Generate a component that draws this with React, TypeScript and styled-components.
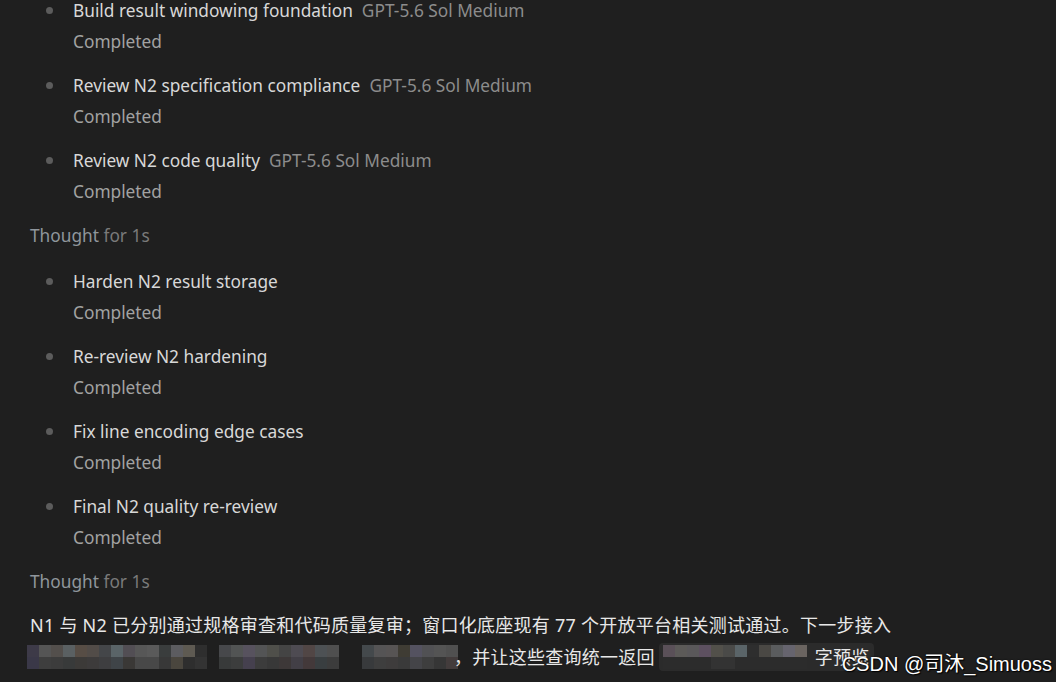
import styled, { createGlobalStyle } from "styled-components";

const GlobalStyle = createGlobalStyle`
  html, body {
    margin: 0;
    padding: 0;
    background: #1f1f1f;
  }
  body {
    width: 1056px;
    height: 682px;
    overflow: hidden;
    font-family: "Noto Sans", "Open Sans", "Noto Sans CJK SC", sans-serif;
  }
`;

type Task = { title: string; model?: string };

const firstBatch: Task[] = [
  { title: "Build result windowing foundation", model: "GPT-5.6 Sol Medium" },
  { title: "Review N2 specification compliance", model: "GPT-5.6 Sol Medium" },
  { title: "Review N2 code quality", model: "GPT-5.6 Sol Medium" },
];

const secondBatch: Task[] = [
  { title: "Harden N2 result storage" },
  { title: "Re-review N2 hardening" },
  { title: "Fix line encoding edge cases" },
  { title: "Final N2 quality re-review" },
];

// redacted spans, two rows of 12px cells
const blockA = [
  ["#3d3a48", "#555555", "#534f4c", "#5a6062", "#574d45", "#524c48", "#444649", "#5a6468", "#524e54", "#575757", "#5a5a5a", "#3a3d3d", "#5c5c60", "#5e5a52", "#2e2e2e"],
  ["#3a3848", "#3e3e3e", "#3c3c3c", "#383a3a", "#3c3a38", "#3d3b3b", "#3e3e40", "#3f4448", "#3a3836", "#484848", "#484848", "#383838", "#4a463e", "#2e2e2e", "#333333"],
];
const blockB = [
  ["#47484b", "#525454", "#57525e", "#535455", "#4f4f4a", "#444444", "#4e4b52", "#514645", "#4d5154", "#4f4f4f"],
  ["#383a3a", "#3c3d3d", "#45404e", "#3c3c3c", "#383838", "#3d3838", "#423f46", "#43393a", "#393e40", "#3c3c3c"],
];
const blockC = [
  ["#44494c", "#555455", "#575454", "#3f3c34", "#545260", "#515154", "#545454", "#505050"],
  ["#383a3c", "#3e3e3e", "#3e3c3c", "#3a3a3a", "#444448", "#3e3e3e", "#363636", "#433c3c"],
];
const blockD = [
  ["#5a5058", "#5c5a58", "#5a585a", "#5d5060", "#52504a", "#4a4a48", "#5a6468", "#2e2e2e", "#4a4844", "#5a5c5e", "#66646e", "#6a6460"],
  ["#2c2c2c", "#2c2c2c", "#2c2c2c", "#2c2c2c", "#333333", "#333333", "#2c2c2c", "#2c2c2c", "#2c2c2c", "#2c2c2c", "#2c2c2c", "#2c2c2c"],
];

const Redacted = ({ rows, gap = 12 }: { rows: string[][]; gap?: number }) => (
  <MosaicBox $gap={gap}>
    {rows.map((row, r) => (
      <MosaicRow key={r}>
        {row.map((c, i) => (
          <Cell key={i} $color={c} />
        ))}
      </MosaicRow>
    ))}
  </MosaicBox>
);

const TaskList = ({ tasks }: { tasks: Task[] }) => (
  <List>
    {tasks.map((t) => (
      <Item key={t.title}>
        <TitleLine>
          <Dot />
          <Title>{t.title}</Title>
          {t.model && <Model>{t.model}</Model>}
        </TitleLine>
        <Status>Completed</Status>
      </Item>
    ))}
  </List>
);

export default function App() {
  return (
    <>
      <GlobalStyle />
      <Transcript>
        <TaskList tasks={firstBatch} />
        <Thought>
          Thought <span>for 1s</span>
        </Thought>
        <TaskList tasks={secondBatch} />
        <Thought>
          Thought <span>for 1s</span>
        </Thought>
        <Message>
          <p>
            N1 与 N2 已分别通过规格审查和代码质量复审；窗口化底座现有 77 个开放平台相关测试通过。下一步接入
          </p>
          <p>
            <Redacted rows={blockA} />
            <Redacted rows={blockB} gap={23} />
            <Redacted rows={blockC} gap={0} />
            <Comma>，</Comma>并让这些查询统一返回
            <Code>
              <Redacted rows={blockD} gap={8} />
              <span>字预览</span>
            </Code>
          </p>
        </Message>
      </Transcript>
      <Watermark>CSDN @司沐_Simuoss</Watermark>
    </>
  );
}

const Transcript = styled.div`
  display: flex;
  flex-direction: column;
  padding: 0 0 0 30px;
  margin-top: -2px;
  font-size: 17.3px;
`;

const List = styled.ul`
  list-style: none;
  margin: 0;
  padding: 0;
  display: flex;
  flex-direction: column;
  gap: 19px;
`;

const Item = styled.li`
  display: flex;
  flex-direction: column;
  gap: 8px;
  padding-left: 43px;
`;

const TitleLine = styled.div`
  position: relative;
  display: flex;
  align-items: center;
  gap: 9px;
  height: 24px;
  white-space: nowrap;
`;

const Dot = styled.span`
  position: absolute;
  left: -27px;
  top: 9px;
  width: 7px;
  height: 7px;
  border-radius: 50%;
  background: #5c5c5c;
`;

const Title = styled.span`
  color: #d8d8d8;
`;

const Model = styled.span`
  color: #8c8c8c;
`;

const Status = styled.div`
  height: 24px;
  line-height: 24px;
  color: #a2a2a2;
`;

const Thought = styled.div`
  height: 24px;
  line-height: 24px;
  margin: 20px 0 21px;
  color: #8f969c;

  span {
    color: #7a7a7a;
  }
`;

const Message = styled.div`
  margin-top: -6px;
  color: #e8e8e8;
  font-size: 18px;
  letter-spacing: 0.25px;

  p {
    margin: 0;
    height: 32px;
    line-height: 24px;
    display: flex;
    align-items: center;
    white-space: nowrap;
  }
`;

const MosaicBox = styled.span<{ $gap: number }>`
  display: inline-flex;
  flex-direction: column;
  margin-right: ${(p) => p.$gap}px;
  &:first-child {
    margin-left: -3px;
  }
`;

const MosaicRow = styled.span`
  display: flex;
`;

const Cell = styled.span<{ $color: string }>`
  width: 12px;
  height: 12px;
  background: ${(p) => p.$color};
`;

const Comma = styled.span`
  margin-left: -4px;
`;

const Code = styled.span`
  display: inline-flex;
  align-items: center;
  margin-left: 4px;
  padding: 2px 4px 2px 4px;
  border-radius: 4px;
  background: #2b2b2b;

  ${MosaicBox} {
    margin-left: 0;
  }
`;

const Watermark = styled.div`
  position: absolute;
  right: 4px;
  bottom: 5px;
  font-family: "Liberation Sans", "Noto Sans CJK SC", sans-serif;
  font-size: 20px;
  color: #ffffff;
  text-shadow: 0 0 2px #000, 1px 1px 1px #000;
  white-space: nowrap;
`;
